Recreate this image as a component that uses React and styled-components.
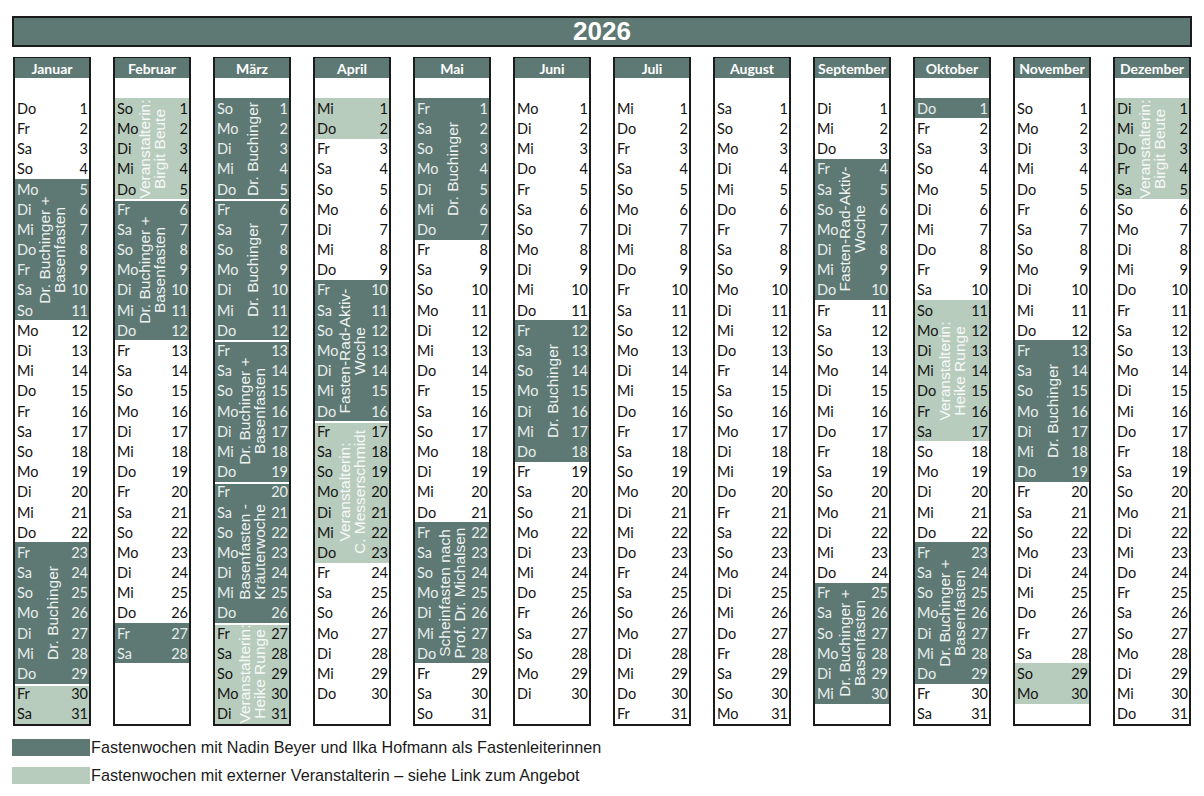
import React from 'react';
import styled, { createGlobalStyle } from 'styled-components';

const DARK = '#5e7974';
const LIGHT = '#b8ccbd';

const GlobalStyle = createGlobalStyle`
  body {
    margin: 0;
    background: #ffffff;
    font-family: "Liberation Sans", Arial, sans-serif;
  }
`;

const Page = styled.div`
  width: 1204px;
  height: 796px;
  padding: 16px 12px 0 12px;
  box-sizing: border-box;
`;

const TitleBar = styled.div`
  height: 31px;
  box-sizing: border-box;
  border: 2px solid #1b1b1b;
  background: ${DARK};
  color: #fff;
  font-family: "Liberation Sans", Arial, sans-serif;
  font-weight: bold;
  font-size: 26px;
  display: flex;
  align-items: center;
  justify-content: center;
`;

const Months = styled.div`
  display: grid;
  grid-template-columns: repeat(12, 78px);
  column-gap: 22px;
  margin: 10px 0 0 1px;
`;

const MonthBox = styled.div`
  border: 2px solid #1b1b1b;
  border-top-width: 1px;
  display: flex;
  flex-direction: column;
  font-family: Lato, "Open Sans", sans-serif;
  font-size: 14.5px;
`;

const MonthHead = styled.div`
  height: 20px;
  background: ${DARK};
  color: #fff;
  font-weight: bold;
  font-size: 14px;
  display: flex;
  align-items: center;
  justify-content: center;
`;

const Row = styled.div`
  height: 20.2px;
  display: flex;
  align-items: center;
  justify-content: space-between;
  padding: 0 1px 0 2px;
  color: ${(p) => (p.$tone === 'dark' ? '#e9eeec' : '#141414')};
`;

const Block = styled.div`
  position: relative;
  background: ${(p) => (p.$tone === 'dark' ? DARK : LIGHT)};
  box-shadow: ${(p) => (p.$joined ? 'inset 0 2px 0 #ffffff' : 'none')};
`;

const Label = styled.div`
  position: absolute;
  left: 50%;
  top: 50%;
  transform: translate(-50%, -50%) rotate(-90deg);
  white-space: nowrap;
  text-align: center;
  font-family: "Liberation Sans", Arial, sans-serif;
  font-size: 15.5px;
  line-height: 15px;
  color: ${(p) => (p.$tone === 'dark' ? '#eef2f0' : '#f7f9f8')};
  pointer-events: none;
`;

const Legend = styled.div`
  margin-top: 12px;
  display: flex;
  flex-direction: column;
  gap: 9px;
`;

const LegendRow = styled.div`
  display: flex;
  align-items: center;
  gap: 1px;
  font-family: "Liberation Sans", Arial, sans-serif;
  font-size: 16.2px;
  color: #1a1a1a;
`;

const Swatch = styled.div`
  width: 78px;
  height: 17px;
  background: ${(p) => (p.$tone === 'dark' ? DARK : LIGHT)};
`;

const DAYS = ['Mo', 'Di', 'Mi', 'Do', 'Fr', 'Sa', 'So'];

// start: weekday index of the 1st (0 = Mo)
const months = [
  { name: 'Januar', start: 3, len: 31, blocks: [
    { from: 5, to: 11, tone: 'dark', text: ['Dr. Buchinger +', 'Basenfasten'] },
    { from: 23, to: 29, tone: 'dark', text: ['Dr. Buchinger'] },
    { from: 30, to: 31, tone: 'light' },
  ] },
  { name: 'Februar', start: 6, len: 28, blocks: [
    { from: 1, to: 5, tone: 'light', text: ['Veranstalterin:', 'Birgit Beute'] },
    { from: 6, to: 12, tone: 'dark', text: ['Dr. Buchinger +', 'Basenfasten'] },
    { from: 27, to: 28, tone: 'dark' },
  ] },
  { name: 'März', start: 6, len: 31, blocks: [
    { from: 1, to: 5, tone: 'dark', text: ['Dr. Buchinger'] },
    { from: 6, to: 12, tone: 'dark', text: ['Dr. Buchinger'] },
    { from: 13, to: 19, tone: 'dark', text: ['Dr. Buchinger +', 'Basenfasten'] },
    { from: 20, to: 26, tone: 'dark', text: ['Basenfasten -', 'Kräuterwoche'] },
    { from: 27, to: 31, tone: 'light', text: ['Veranstalterin:', 'Heike Runge'] },
  ] },
  { name: 'April', start: 2, len: 30, blocks: [
    { from: 1, to: 2, tone: 'light' },
    { from: 10, to: 16, tone: 'dark', text: ['Fasten-Rad-Aktiv-', 'Woche'] },
    { from: 17, to: 23, tone: 'light', text: ['Veranstalterin:', 'C. Messerschmidt'] },
  ] },
  { name: 'Mai', start: 4, len: 31, blocks: [
    { from: 1, to: 7, tone: 'dark', text: ['Dr. Buchinger'] },
    { from: 22, to: 28, tone: 'dark', text: ['Scheinfasten nach', 'Prof. Dr. Michalsen'] },
  ] },
  { name: 'Juni', start: 0, len: 30, blocks: [
    { from: 12, to: 18, tone: 'dark', text: ['Dr. Buchinger'] },
  ] },
  { name: 'Juli', start: 2, len: 31, blocks: [] },
  { name: 'August', start: 5, len: 31, blocks: [] },
  { name: 'September', start: 1, len: 30, blocks: [
    { from: 4, to: 10, tone: 'dark', text: ['Fasten-Rad-Aktiv-', 'Woche'] },
    { from: 25, to: 30, tone: 'dark', text: ['Dr. Buchinger +', 'Basenfasten'] },
  ] },
  { name: 'Oktober', start: 3, len: 31, blocks: [
    { from: 1, to: 1, tone: 'dark' },
    { from: 11, to: 17, tone: 'light', text: ['Veranstalterin:', 'Heike Runge'] },
    { from: 23, to: 29, tone: 'dark', text: ['Dr. Buchinger +', 'Basenfasten'] },
  ] },
  { name: 'November', start: 6, len: 30, blocks: [
    { from: 13, to: 19, tone: 'dark', text: ['Dr. Buchinger'] },
    { from: 29, to: 30, tone: 'light' },
  ] },
  { name: 'Dezember', start: 1, len: 31, blocks: [
    { from: 1, to: 5, tone: 'light', text: ['Veranstalterin:', 'Birgit Beute'] },
  ] },
];

function DayRow({ month, day, tone }) {
  return (
    <Row $tone={tone}>
      <span>{DAYS[(month.start + day - 1) % 7]}</span>
      <span>{day}</span>
    </Row>
  );
}

function Month({ month }) {
  const parts = [];
  let d = 1;
  let prevBlockEnd = -1;
  while (d <= month.len) {
    const block = month.blocks.find((b) => b.from === d);
    if (block) {
      const rows = [];
      for (let i = block.from; i <= block.to; i++) {
        rows.push(<DayRow key={i} month={month} day={i} tone={block.tone === 'dark' ? 'dark' : 'plain'} />);
      }
      parts.push(
        <Block key={'b' + d} $tone={block.tone} $joined={prevBlockEnd === d - 1}>
          {rows}
          {block.text && (
            <Label $tone={block.tone}>
              {block.text.map((t) => (
                <div key={t}>{t}</div>
              ))}
            </Label>
          )}
        </Block>
      );
      prevBlockEnd = block.to;
      d = block.to + 1;
    } else {
      parts.push(<DayRow key={d} month={month} day={d} tone="plain" />);
      d += 1;
    }
  }
  for (let i = month.len; i < 31; i++) parts.push(<Row key={'e' + i} />);

  return (
    <MonthBox>
      <MonthHead>{month.name}</MonthHead>
      <Row />
      {parts}
    </MonthBox>
  );
}

export default function App() {
  return (
    <Page>
      <GlobalStyle />
      <TitleBar>2026</TitleBar>
      <Months>
        {months.map((m) => (
          <Month key={m.name} month={m} />
        ))}
      </Months>
      <Legend>
        <LegendRow>
          <Swatch $tone="dark" />
          Fastenwochen mit Nadin Beyer und Ilka Hofmann als Fastenleiterinnen
        </LegendRow>
        <LegendRow>
          <Swatch $tone="light" />
          Fastenwochen mit externer Veranstalterin – siehe Link zum Angebot
        </LegendRow>
      </Legend>
    </Page>
  );
}
